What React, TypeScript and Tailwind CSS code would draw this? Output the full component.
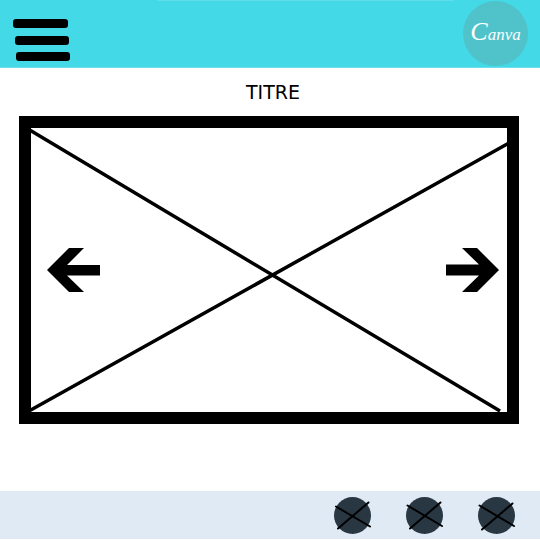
const dots = [
  { label: "Lien 1", down: "M2 9.5 36 29.5", up: "M4 31.5 34.5 5.5" },
  { label: "Lien 2", down: "M1.5 8.5 36 29", up: "M4 31.5 34.5 5.5" },
  { label: "Lien 3", down: "M1.5 8.5 36 29", up: "M4 32.5 34.5 6.5" },
];

function Header() {
  return (
    <header className="relative flex h-17 items-start justify-between border-b border-[#69e0ea] bg-[#43d9e7] pl-[13px] pr-3">
      <span className="absolute left-[29%] top-0 h-px w-[55%] bg-[#5fdeea]" />
      <button type="button" aria-label="Menu" className="mt-[19px]">
        <svg width="58" height="42" viewBox="0 0 58 42" className="block" fill="#000">
          <rect x="0" y="0" width="55" height="9" rx="3" />
          <rect x="2" y="17" width="54" height="9" rx="3" />
          <rect x="3" y="33" width="54" height="9" rx="3" />
        </svg>
      </button>
      <a
        href="#"
        className="mt-px flex size-[65px] items-center justify-center rounded-full bg-[#50c3ca] pb-1 font-['Liberation_Serif',serif] text-[17px] font-medium italic leading-none text-white"
      >
        <span>
          <span className="text-[26px]">C</span>anva
        </span>
      </a>
    </header>
  );
}

function Carousel() {
  return (
    <section
      aria-label="Carrousel"
      className="relative ml-[19px] mr-[21px] mt-3 flex aspect-[500/308] items-center justify-between border-12 border-black pl-4 pr-2"
    >
      <svg
        viewBox="0 0 476 284"
        preserveAspectRatio="none"
        className="absolute inset-0 size-full overflow-visible"
        stroke="#000"
        strokeWidth="3.5"
        aria-hidden="true"
      >
        <path d="M-3 1 469 283M-2 283 478 15" />
      </svg>
      <button type="button" aria-label="Précédent" className="relative">
        <svg width="53" height="44" viewBox="0 0 53 44" className="block">
          <path d="M0 22 22 0H37L20 17H53V27.500H20L37 44H22Z" />
        </svg>
      </button>
      <button type="button" aria-label="Suivant" className="relative">
        <svg width="53" height="44" viewBox="0 0 53 44" className="block">
          <path d="M53 22 31 0H16L33 16.500H0V27.500H33L16 44H31Z" />
        </svg>
      </button>
    </section>
  );
}

function Footer() {
  return (
    <footer className="mb-px flex h-12 items-center justify-end gap-[35px] bg-[#e0eaf5] pr-[25px]">
      {dots.map((dot) => (
        <button key={dot.label} type="button" aria-label={dot.label}>
          <svg width="37" height="37" viewBox="0 0 37 37" className="block overflow-visible">
            <circle cx="18.5" cy="18.500" r="18.500" fill="#293743" />
            <path d={dot.down} stroke="#000" strokeWidth="2" strokeLinecap="round" />
            <path d={dot.up} stroke="#000" strokeWidth="2" strokeLinecap="round" />
          </svg>
        </button>
      ))}
    </footer>
  );
}

export default function App() {
  return (
    <div className="flex min-h-screen flex-col bg-white font-['DejaVu_Sans',sans-serif] text-black">
      <Header />
      <main className="flex-1">
        <h1 className="mt-3 pl-1.5 text-center text-[19px] leading-6">TITRE</h1>
        <Carousel />
      </main>
      <Footer />
    </div>
  );
}
